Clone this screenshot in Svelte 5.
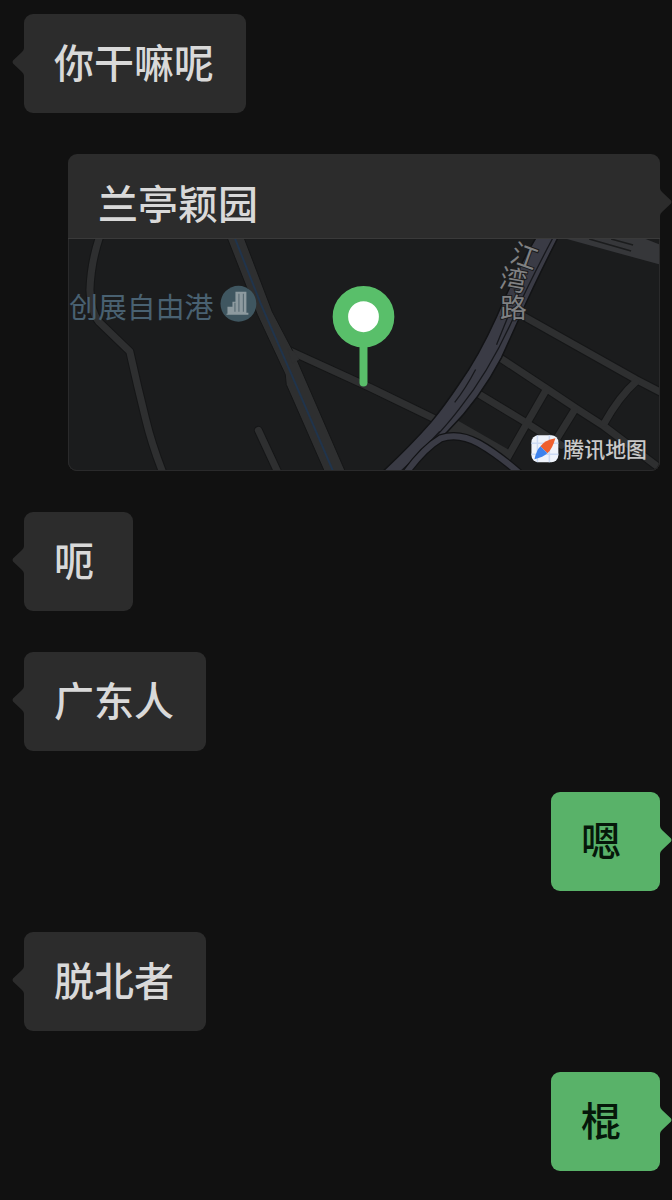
<script lang="ts">
  type Message = { id: number; from: "them" | "me"; text: string; kind?: "location" };

  const MESSAGES: Message[] = [
    { id: 1, from: "them", text: "你干嘛呢" },
    { id: 2, from: "me", text: "兰亭颖园", kind: "location" },
    { id: 3, from: "them", text: "呃" },
    { id: 4, from: "them", text: "广东人" },
    { id: 5, from: "me", text: "嗯" },
    { id: 6, from: "them", text: "脱北者" },
    { id: 7, from: "me", text: "棍" },
  ];

  // Minor streets, drawn twice: dark casing first, then the fill.
  const STREETS = [
    "M99 236 Q90 262 89 290 Q90 312 98 322 L129 352 L137 387 L145 420 Q151 445 162 473",
    "M289 351 L370 388 L436 420",
    "M258 431 L278 474",
    "M525 317 L637 380 L664 394",
    "M500 358 L547 389 L577 409 L605 427 L658 467",
    "M480 395 L523 421 L562 446",
    "M637 382 Q620 397 605 424",
    "M547 390 L528 423 L507 460",
    "M575 411 L557 440",
  ];
</script>

<main class="chat">
  {#each MESSAGES as message (message.id)}
    {#if message.kind === "location"}
      <article class="card">
        <svg class="tail" viewBox="0 0 12 28" aria-hidden="true">
          <path d="M0 0 Q0 2 2 4 L11 12.500 Q12 14 11 15.500 L2 24 Q0 26 0 28Z" />
        </svg>
        <h2 class="card-title">{message.text}</h2>
        <svg class="map" viewBox="68 239 592 232" preserveAspectRatio="xMidYMid slice" role="img" aria-label={message.text}>
          <rect x="68" y="239" width="592" height="232" fill="#1b1c1d" />

          <g fill="none" stroke-linecap="round" stroke-linejoin="round">
            {#each STREETS as d}
              <path {d} stroke="#151617" stroke-width="9" />
            {/each}
            {#each STREETS as d}
              <path {d} stroke="#2e2f30" stroke-width="7" />
            {/each}
          </g>

          <!-- canal road -->
          <path
            d="M226 236 L257 315 L285 375 L286 385 L325 474 H346 L294 354 L272 312 L243 236Z"
            fill="#2e2f30"
            stroke="#151617"
          />
          <path d="M287 349 L294 352 L299 360 L292 364Z" fill="#2e2f30" />
          <path d="M234 237 L260 303 L290 372 L333 472" fill="none" stroke="#20344c" stroke-width="2" />

          <!-- slip area beside the highway -->
          <path d="M458 421 L512 452 L508 460 L470 438 L445 434Z" fill="#2e2f30" />
          <path d="M564 238 H644 L662 245 V265Z" fill="#36373a" />
          <path d="M590 239 L632 251 M612 239 L634 245" stroke="#1b1c1d" stroke-width="1.500" />

          <!-- highway -->
          <path
            d="M537 237 Q516 272 497 317 Q479 357 459 385 Q445 406 431 423 Q410 447 383 472 H409 Q428 454 449 431 Q480 400 502 358 L520 318 Q535 284 559 237Z"
            fill="#3a3b45"
            stroke="#121315"
            stroke-width="1.500"
          />
          <g fill="none" stroke="#17181c" stroke-width="1.300">
            <path d="M554 237 Q528 286 513 320 Q490 371 460 409 Q438 438 401 472" />
            <path d="M508 318 L497 345 M476 370 Q466 389 455 403 M440 432 L428 445" />
          </g>
          <path d="M406 474 Q424 449 441 439 Q459 433 479 444 Q497 454 520 474" fill="none" stroke="#121315" stroke-width="8.500" />
          <path d="M406 474 Q424 449 441 439 Q459 433 479 444 Q497 454 520 474" fill="none" stroke="#3a3b45" stroke-width="6" />

          <text class="place" x="68" y="318">创展自由港</text>
          <circle cx="238" cy="304" r="18" fill="#3f5660" />
          <path
            d="M227 314 V307 H232 V302 H235 V292 H246 V313 H248 V315 H226 V314Z"
            fill="#8d9a9f"
          />
          <path d="M234.500 303 V312 M238.500 294 V312 M243 294 V312" stroke="#5b6d75" stroke-width="1.200" />

          <g class="road">
            <text transform="translate(525 256) rotate(20)" y="10">江</text>
            <text transform="translate(514 280) rotate(10)" y="10">湾</text>
            <text transform="translate(514 308)" y="10">路</text>
          </g>

          <path d="M363.500 340 V383" stroke="#59bf6a" stroke-width="8" stroke-linecap="round" />
          <circle cx="363.500" cy="317" r="23.200" fill="#fff" stroke="#59bf6a" stroke-width="15.500" />

          <rect x="532" y="436" width="27" height="27" rx="7" fill="#eff3fb" />
          <path
            d="M538 436 V463 M550 436 V463 M532 444 H559 M532 455 H559"
            stroke="#ccdaf4"
            stroke-width="1.500"
          />
          <path d="M556 439 Q545 441 541 447 L548 454 Q553 450 556 439Z" fill="#ee6030" />
          <path d="M541 447 Q537 451 535 460 Q544 458 548 454Z" fill="#3d82ed" />
          <text class="brand" x="564" y="458">腾讯地图</text>
        </svg>
      </article>
    {:else}
      <p class="bubble" class:mine={message.from === "me"}>
        <svg class="tail" viewBox="0 0 12 28" aria-hidden="true">
          <path d="M0 0 Q0 2 2 4 L11 12.500 Q12 14 11 15.500 L2 24 Q0 26 0 28Z" />
        </svg>
        {message.text}
      </p>
    {/if}
  {/each}
</main>

<style>
  :global(body) {
    margin: 0;
    background: #111111;
  }

  .chat {
    display: flex;
    flex-direction: column;
    align-items: flex-start;
    gap: 41px;
    padding: 14px 12px 28px 24px;
    font-family: "Noto Sans CJK SC", sans-serif;
    font-size: 40px;
    font-weight: 500;
    line-height: 59px;
    color: #d9d9d9;
  }

  .bubble,
  .card {
    position: relative;
    box-sizing: border-box;
    margin: 0;
    border-radius: 9px;
    background: #2c2c2c;
  }

  .bubble {
    min-width: 109px;
    padding: 18px 32px 22px 30px;
  }

  .mine {
    align-self: flex-end;
    background: #59b269;
    color: #06180a;
  }

  .tail {
    position: absolute;
    top: 34px;
    right: 100%;
    width: 12px;
    height: 28px;
    fill: #2c2c2c;
    transform: scaleX(-1);
  }

  .mine .tail,
  .card .tail {
    right: auto;
    left: 100%;
    transform: none;
  }

  .mine .tail {
    fill: #59b269;
  }

  .card {
    align-self: stretch;
    margin-left: 44px;
  }

  .card-title {
    margin: 0;
    padding: 19px 30px 6px;
    border-bottom: 1px solid #3a3a3a;
    font-size: inherit;
    font-weight: inherit;
  }

  .map {
    display: block;
    box-sizing: border-box;
    width: 100%;
    border: 1px solid #2a2a2b;
    border-top: 0;
    border-radius: 0 0 9px 9px;
  }

  .place {
    font-size: 29px;
    font-weight: 400;
    fill: #496171;
  }

  .road {
    font-size: 27px;
    font-weight: 400;
    text-anchor: middle;
    fill: #808183;
    stroke: #1b1c1d;
    stroke-width: 2px;
    paint-order: stroke;
  }

  .brand {
    font-size: 21px;
    font-weight: 500;
    fill: #c9c9c9;
  }
</style>
